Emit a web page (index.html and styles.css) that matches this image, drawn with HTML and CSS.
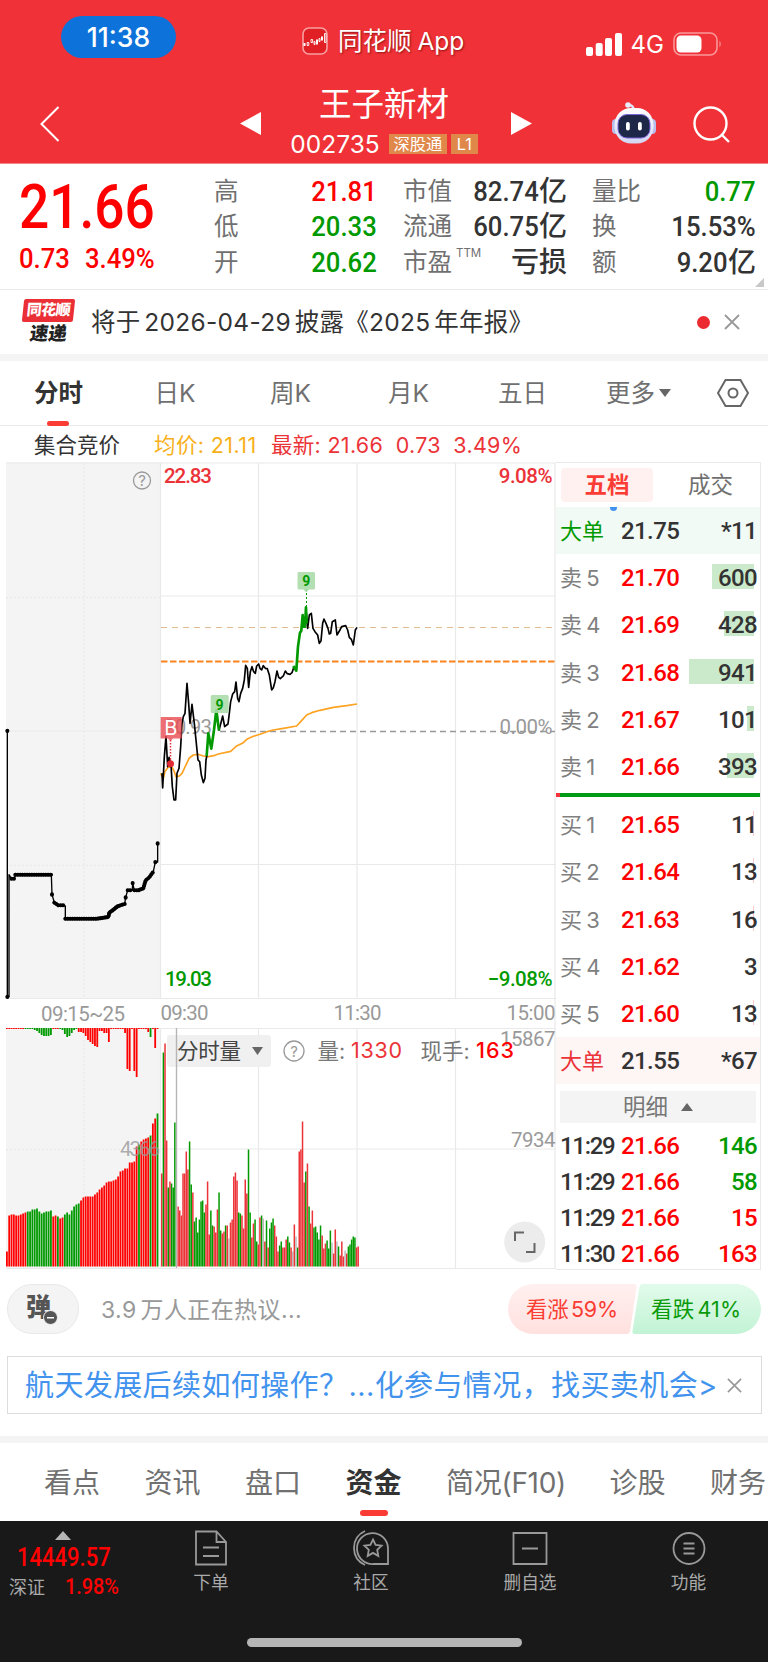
FILE: index.html
```html
<!DOCTYPE html>
<html lang="zh-CN">
<head>
  <meta charset="UTF-8" />
  <meta name="viewport" content="width=device-width, initial-scale=1.0" />
  <title>王子新材 002735</title>
  <link rel="stylesheet" href="styles.css">
</head>
<body>
  <header class="header">
    <div class="status">
      <span class="clock">11:38</span>
      <div class="app">
        <svg width="26" height="28" viewBox="0 0 26 28">
          <rect x="1" y="1" width="24" height="26" rx="6" fill="#e02024" stroke="#f8a0a2" stroke-width="1.6"/>
          <path d="M2.500 16v3M15 12.500v5M20 9.500v4" stroke="#fff" stroke-width="2"/>
          <path d="M5.200 15.500h1.600v3H5.200zM9 12.500h1.600v3H9zM12 14.500h1v3h-1zM17 11.500h1v3h-1zM22.500 6.500h1.500v9h-1.500z" fill="none" stroke="#fff" stroke-width=".9"/>
        </svg>
        <span>同花顺 App</span>
      </div>
      <div class="signal">
        <svg width="36" height="23" viewBox="0 0 36 23" fill="#fff">
          <rect x="0" y="14" width="7" height="9" rx="2"/><rect x="9.700" y="10" width="7" height="13" rx="2"/>
          <rect x="19" y="5" width="7" height="18" rx="2"/><rect x="29" y="0" width="7" height="23" rx="2"/>
        </svg>
        <span>4G</span>
        <svg width="49" height="24" viewBox="0 0 49 24">
          <rect x="1" y="1" width="43" height="22" rx="7" fill="none" stroke="#f9989a" stroke-width="1.600"/>
          <rect x="3.500" y="3.500" width="25" height="17" rx="4.500" fill="#fff"/>
          <path d="M46.500 8.500q2.500 3.500 0 7z" fill="#f9989a"/>
        </svg>
      </div>
    </div>
    <div class="nav">
      <svg class="back" width="20" height="36" viewBox="0 0 20 36"><path d="M18.500 1L1.500 18l17 17" fill="none" stroke="#fff" stroke-width="2"/></svg>
      <svg class="prev" width="21" height="23" viewBox="0 0 21 23"><path d="M21 0v23L0 11.500z" fill="#fff"/></svg>
      <div class="stock">
        <h1>王子新材</h1>
        <div class="code"><span>002735</span><em>深股通</em><em>L1</em></div>
      </div>
      <svg class="next" width="21" height="23" viewBox="0 0 21 23"><path d="M0 0v23l21-11.500z" fill="#fff"/></svg>
      <svg class="robot" width="44" height="42" viewBox="0 0 44 42">
        <defs><linearGradient id="shell" x2="0" y2="1"><stop stop-color="#fff"/><stop offset="1" stop-color="#d3d6f2"/></linearGradient></defs>
        <path d="M22 8q-1-5-5-5" fill="none" stroke="#dfe3f8" stroke-width="2.500"/>
        <circle cx="16" cy="3" r="2.800" fill="#e8ebfb"/>
        <rect x="0" y="17" width="9" height="15" rx="4" fill="#b9bdec"/><rect x="35" y="17" width="9" height="15" rx="4" fill="#b9bdec"/>
        <rect x="2.500" y="6" width="39" height="35.500" rx="16.500" fill="url(#shell)"/>
        <rect x="6" y="12.500" width="32" height="23.500" rx="9" fill="#1f2749" stroke="#7b63d8" stroke-width="1"/>
        <rect x="14" y="20" width="3.800" height="8.500" rx="1.900" fill="#fff"/><rect x="26" y="20" width="3.800" height="8.500" rx="1.900" fill="#fff"/>
      </svg>
      <svg class="search" width="37" height="37" viewBox="0 0 37 37" fill="none" stroke="#fff" stroke-width="2.400"><circle cx="17.500" cy="17.500" r="16"/><path d="M29 29l7 7"/></svg>
    </div>
  </header>

  <section class="quote">
    <div class="price up">
      <div class="big"><b>21.66</b></div>
      <div class="change"><b>0.73</b><b>3.49%</b></div>
    </div>
    <dl class="col-a">
      <div><dt>高</dt><dd class="up"><b>21.81</b></dd></div>
      <div><dt>低</dt><dd class="down"><b>20.33</b></dd></div>
      <div><dt>开</dt><dd class="down"><b>20.62</b></dd></div>
    </dl>
    <dl class="col-b">
      <div><dt>市值</dt><dd><b>82.74</b>亿</dd></div>
      <div><dt>流通</dt><dd><b>60.75</b>亿</dd></div>
      <div><dt>市盈<sup>TTM</sup></dt><dd>亏损</dd></div>
    </dl>
    <dl class="col-c">
      <div><dt>量比</dt><dd class="down"><b>0.77</b></dd></div>
      <div><dt>换</dt><dd><b>15.53%</b></dd></div>
      <div><dt>额</dt><dd><b>9.20</b>亿</dd></div>
    </dl>
    <i class="corner"></i>
  </section>

  <section class="notice">
    <div class="logo"><span>同花顺</span><strong>速递</strong></div>
    <p>将于 2026-04-29 披露《2025 年年报》</p>
    <i class="dot"></i>
    <svg width="16" height="16" viewBox="0 0 16 16" stroke="#999" stroke-width="1.800"><path d="M1 1l14 14M15 1L1 15"/></svg>
  </section>

  <nav class="tabs">
    <span class="active">分时</span><span>日K</span><span>周K</span><span>月K</span><span>五日</span>
    <span class="more">更多<i></i></span>
    <svg width="32" height="30" viewBox="0 0 32 30" fill="none" stroke="#666" stroke-width="2"><path d="M8.500 2h15L31 15l-7.500 13h-15L1 15z"/><circle cx="16" cy="15" r="4.500"/></svg>
  </nav>

  <div class="info">
    <span class="auction">集合竞价</span>
    <span class="avg">均价: 21.11</span>
    <span class="last">最新: 21.66</span><span class="last">0.73</span><span class="last">3.49%</span>
  </div>

  <main class="board">
    <svg class="chart" width="556" height="814" viewBox="0 456 556 814">
      <rect x="6" y="462" width="154" height="537" fill="#f4f4f4"/>
      <rect x="6" y="1028" width="154" height="241" fill="#f4f4f4"/>
      <g stroke="#e9e9e9" fill="none" stroke-width="1.200">
        <path d="M6 463H556M160 596H556M6 731H160M160 864.500H556M6 998.500H556M6 1028.500H556M160 1149H556M6 1268.500H556"/>
        <path d="M160.500 463V998M258.500 463V998M357 463V998M455.500 463V998M555 463V1269M160.500 1028V1269M258.500 1028V1269M357 1028V1269M455.500 1028V1269"/>
        <path d="M84 463V998M84 1028V1268M6 597.500H160M6 865.500H160M6 1149.500H160" stroke-dasharray="2 2"/>
      </g>

      <g class="help"><circle cx="142" cy="480.500" r="8.500"/><text x="142" y="486">?</text></g>

      <text class="axis gray" x="164" y="734" textLength="48">20.93</text>
      <text class="axis gray end" x="552" y="734">0.00%</text>
      <path d="M220 731.500H555" stroke="#999" stroke-width="1.300" stroke-dasharray="6 4"/>
      <path d="M161 627.500H555" stroke="#dfbb8f" stroke-width="1.200" stroke-dasharray="6 5"/>
      <path d="M161 661.500H555" stroke="#f98420" stroke-width="1.900" stroke-dasharray="6.500 2.500"/>

      <!-- call auction 09:15-09:25 -->
      <g transform="translate(0 700) scale(.3333)" fill="none" stroke="#000" stroke-linejoin="round" stroke-linecap="round">
        <path stroke-width="4" d="M22 92V890H27V524L34 536H43L46 524H154L156 583L163 608L175 616L196 618V656H293L325 651L328 638L374 612L377 592L383 571H397L398 549L403 571L430 565L437 541L460 515L466 486H473V430"/>
        <path stroke-width="12" stroke-dasharray="1 6" d="M46 524H154M156 583V584M163 608L175 616H194M196 656H293L325 651L328 638L340 630L352 619L374 612M377 592V593M383 571H395M398 549V550M403 571H415L430 565L437 541L448 532L460 515M466 486V487M473 430V431M34 536H43M22 92V93M22 890V891"/>
        <path stroke-width="10" d="M46 524H154M196 656H293L325 651L328 638L352 619"/>
      </g>

      <!-- average and intraday price -->
      <g transform="translate(140 560) scale(.3333)" fill="none" stroke-linejoin="round" stroke-width="5">
        <path stroke="#fda321" d="M62 640L70 655L75 635L84 622L95 620L103 635L108 650L118 648L126 640L138 615L148 594L160 585L174 583L190 588L205 590L225 586L235 582L272 574L290 558L310 548L322 537L340 529L360 523L385 514L400 510L430 505L470 498L482 485L500 465L515 458L540 451L580 442L620 437L651 432"/>
        <path stroke="#000" d="M66 640L68 684L73 590L78 530L83 620L87 592L93 615L97 680L102 720H107L111 640L117 625L122 560L126 490L130 470L135 460L141 370L146 430L150 490L156 433L163 490L168 540L174 600L179 605L184 645L190 668L195 655L198 600L201 585"/>
        <path stroke="#000" d="M237 512L248 468L254 500L264 492L268 460L272 425L278 402L284 395L288 366L293 415L297 425L302 400L308 385L313 360L317 316L322 325L326 382L331 335L336 320L341 335L346 340L350 318L356 312L360 325L365 330L370 317L376 325L382 326L388 345L395 390L400 383L405 365L411 333L416 352L421 356L430 348L436 333L442 341L450 343L456 338L462 320"/>
        <path stroke="#000" d="M499 160L503 205L508 165L514 160L519 205L525 215L533 225L538 250L543 243L548 190L552 177L558 190L564 205L568 222L572 220L577 185L586 180L591 225L600 210L605 200L617 197L623 210L628 232L634 238L640 255L646 210L651 202"/>
        <path stroke="#090" stroke-width="8" d="M200 588L205 520L214 566L222 510L229 450L237 512M460 318L469 332L474 260L480 218L484 212L488 165L491 200L495 200L498 142L500 190"/>
      </g>

      <g class="tag">
        <path d="M306.500 589V608" stroke="#090" stroke-dasharray="2 2"/>
        <path d="M298.500 572H313.500a1.500 1.500 0 0 1 1.500 1.500V588a1.500 1.500 0 0 1-1.500 1.500H309l-2.800 3-2.700-3H299a1.500 1.500 0 0 1-1.500-1.500V573.500a1.500 1.500 0 0 1 1-1.500z"/>
        <text x="306.200" y="586">9</text>
        <rect x="210.700" y="695" width="18" height="18" rx="1.500"/>
        <text x="219.600" y="709.500">9</text>
      </g>
      <g class="buy">
        <path d="M160.700 717H181.700V738.500H173L170.500 741L168 738.500H160.700z" fill="#e94a50" fill-opacity=".8"/>
        <path d="M170.500 740V760" stroke="#e02b35" stroke-width="1.500" stroke-dasharray="1.500 1.500"/>
        <circle cx="170.500" cy="763.700" r="3.500" fill="#e02b35"/>
        <text x="170.700" y="734.500">B</text>
      </g>

      <text class="axis red" x="164" y="483" textLength="48">22.83</text>
      <text class="axis red end" x="552" y="483">9.08%</text>
      <text class="axis green" x="165" y="985.500" textLength="47">19.03</text>
      <text class="axis green end" x="552" y="985.500">−9.08%</text>
      <text class="axis time" x="41" y="1021" textLength="84">09:15~25</text>
      <text class="axis time" x="160.500" y="1019.500" textLength="48">09:30</text>
      <text class="axis time" x="333.500" y="1019.500" textLength="48">11:30</text>
      <text class="axis time end" x="555" y="1019.500">15:00</text>

      <g id="auctionVolume"></g>
      <text class="axis time" x="120" y="1156" textLength="40" fill-opacity=".8">4366</text>
      <g id="volume"></g>

      <rect x="167" y="1035" width="104" height="32" rx="3" fill="#efefef" fill-opacity=".92"/>
      <path d="M176.500 1028V1268" stroke="#b5b5b5" stroke-width="1.400"/>
      <text class="label dark" x="177" y="1058.500" textLength="64">分时量</text>
      <path d="M252 1047H263L257.500 1055z" fill="#666"/>
      <g class="help"><circle cx="294" cy="1051" r="10"/><text x="294" y="1057">?</text></g>
      <text class="label" x="317.500" y="1058.500">量:</text>
      <text class="label value" x="351" y="1058" textLength="51">1330</text>
      <text class="label" x="420.500" y="1058.500">现手:</text>
      <text class="axis time end" x="555" y="1045.500">15867</text>
      <text class="axis time end" x="555" y="1146.500">7934</text>
      <text class="label value now" x="476" y="1058" textLength="38">163</text>
      <circle cx="524.700" cy="1242" r="20.500" fill="#ececec"/>
      <path d="M515 1241V1232.500H524M526 1252H534.500V1243" fill="none" stroke="#666" stroke-width="2"/>
    </svg>

    <aside class="book">
      <div class="book-tabs"><span class="active">五档</span><span>成交</span></div>
      <div class="row big-sell"><span>大单</span><b>21.75</b><b>*11</b></div>
      <div class="row"><span>卖 5</span><b>21.70</b><b><i style="width:42px"></i>600</b></div>
      <div class="row"><span>卖 4</span><b>21.69</b><b><i style="width:30px"></i>428</b></div>
      <div class="row"><span>卖 3</span><b>21.68</b><b><i style="width:65px"></i>941</b></div>
      <div class="row"><span>卖 2</span><b>21.67</b><b><i style="width:7px"></i>101</b></div>
      <div class="row"><span>卖 1</span><b>21.66</b><b><i style="width:27px"></i>393</b></div>
      <div class="ratio"></div>
      <div class="row bid"><span>买 1</span><b>21.65</b><b><i style="width:1px"></i>11</b></div>
      <div class="row bid"><span>买 2</span><b>21.64</b><b><i style="width:1px"></i>13</b></div>
      <div class="row bid"><span>买 3</span><b>21.63</b><b><i style="width:1px"></i>16</b></div>
      <div class="row bid"><span>买 4</span><b>21.62</b><b>3</b></div>
      <div class="row bid"><span>买 5</span><b>21.60</b><b><i style="width:1px"></i>13</b></div>
      <div class="row big-buy"><span>大单</span><b>21.55</b><b>*67</b></div>
      <div class="detail">明细<i></i></div>
      <div class="tick"><b>11:29</b><b>21.66</b><b class="down">146</b></div>
      <div class="tick"><b>11:29</b><b>21.66</b><b class="down">58</b></div>
      <div class="tick"><b>11:29</b><b>21.66</b><b class="up">15</b></div>
      <div class="tick"><b>11:30</b><b>21.66</b><b class="up">163</b></div>
    </aside>
  </main>

  <section class="talk">
    <div class="danmu">弹<i></i></div>
    <p>3.9 万人正在热议...</p>
    <div class="vote">
      <svg width="253" height="50" viewBox="0 0 253 50">
        <defs>
          <linearGradient id="bull" x2="0" y2="1"><stop stop-color="#fff0ef"/><stop offset="1" stop-color="#ffe1df"/></linearGradient>
          <linearGradient id="bear" x2="0" y2="1"><stop stop-color="#e2fbeb"/><stop offset="1" stop-color="#c2f3d5"/></linearGradient>
        </defs>
        <path d="M25 0H126q3 0 2.500 3L122 47q-.500 3-3 3H25a25 25 0 0 1 0-50z" fill="url(#bull)"/>
        <path d="M228 0H135q-3 0-3.500 3L124.500 47q-.500 3 2.500 3H228a25 25 0 0 0 0-50z" fill="url(#bear)"/>
        <text x="18" y="33" textLength="92" fill="#fa3c32">看涨 59%</text>
        <text x="143" y="33" textLength="90" fill="#0a9a0a">看跌 41%</text>
      </svg>
    </div>
  </section>

  <div class="banner">
    <p>航天发展后续如何操作？...化参与情况，找买卖机会&gt;</p>
    <svg width="15" height="15" viewBox="0 0 16 16" stroke="#999" stroke-width="1.800"><path d="M1 1l14 14M15 1L1 15"/></svg>
  </div>

  <nav class="sections">
    <span>看点</span><span>资讯</span><span>盘口</span><span class="active">资金</span><span class="brief">简况(F10)</span><span>诊股</span><span>财务</span>
  </nav>

  <footer class="footer">
    <div class="index">
      <i></i>
      <div class="points"><b>14449.57</b></div>
      <div class="name"><span>深证</span><b>1.98%</b></div>
    </div>
    <div class="item">
      <svg width="36" height="36" viewBox="0 0 36 36"><path d="M3 1.500H23.500L33 12V34.500H3zM23.500 1.500V12H33M10 17.500H26M10 26H26"/></svg>
      <span>下单</span>
    </div>
    <div class="item">
      <svg width="36" height="36" viewBox="0 0 36 36"><path d="M12 1Q1 6 1 18t11 17M35 34H21A15.500 15.500 0 1 1 35 18.500z"/><path d="M20 9.500l2.600 5.400 6 .800-4.400 4.200 1.100 6-5.300-3-5.300 3 1.100-6-4.400-4.200 6-.800z"/></svg>
      <span>社区</span>
    </div>
    <div class="item">
      <svg width="36" height="36" viewBox="0 0 36 36"><path d="M1.500 3H34.500V34H1.500zM10 18.500H26"/></svg>
      <span>删自选</span>
    </div>
    <div class="item">
      <svg width="36" height="36" viewBox="0 0 36 36"><circle cx="18" cy="18.500" r="15.500"/><path d="M12.500 13.500H23.500M12.500 18.500H23.500M12.500 23.500H23.500"/></svg>
      <span>功能</span>
    </div>
    <div class="home"></div>
  </footer>

  <script src="script.js"></script>
</body>
</html>
```

FILE: styles.css
```css
* {
  box-sizing: border-box;
}
body {
  margin: 0;
  width: 768px;
  height: 1662px;
  overflow: hidden;
  background: #fff;
  color: #333;
  font-family: Inter, "Noto Sans CJK SC", sans-serif;
}
h1, p, dl, dd {
  margin: 0;
}
svg {
  display: block;
  flex: none;
}
b {
  font-family: Roboto, sans-serif;
  font-weight: 500;
}
.up {
  color: #f00;
}
.down {
  color: #009a00;
}

/* header */
.header {
  height: 164px;
  background: #f03137;
  border-bottom: 1px solid #f6888b;
  color: #fff;
}
.status {
  display: flex;
  height: 82px;
  padding: 16px 46px 0 61px;
}
.clock {
  width: 115px;
  height: 42px;
  border-radius: 21px;
  background: #0d72d9;
  font-size: 26.500px;
  font-weight: 500;
  line-height: 43px;
  text-align: center;
}
.app {
  display: flex;
  gap: 10px;
  margin: 11px 0 0 126px;
  height: 28px;
  font-size: 24.500px;
  line-height: 28px;
  text-shadow: 1px 1px 2px rgba(80, 0, 0, .6);
  white-space: nowrap;
  word-spacing: -1px;
}
.signal {
  display: flex;
  align-items: center;
  gap: 9px;
  height: 24px;
  margin: 16px 0 0 auto;
  font-size: 24px;
}
.nav {
  display: flex;
  height: 81px;
  padding-left: 40px;
}
.back {
  margin-top: 24px;
}
.prev {
  margin: 30px 0 0 180px;
}
.stock {
  width: 250px;
  text-align: center;
}
.stock h1 {
  margin: 4px 4px 0 0;
  font-size: 32.500px;
  font-weight: 400;
  line-height: 38px;
}
.code {
  display: flex;
  gap: 4px;
  margin: 5px 0 0 29px;
  align-items: center;
  height: 30px;
  font-size: 24.500px;
}
.code span {
  margin-right: 5px;
  width: 90px;
}
.code em {
  height: 20px;
  padding: 0 4.500px;
  background: #e0884a;
  font-size: 16.300px;
  font-style: normal;
  line-height: 20px;
}
.code em + em {
  padding: 0 6px;
}
.next {
  margin-top: 30px;
}
.robot {
  margin: 20px 0 0 80px;
}
.search {
  margin: 24px 0 0 37px;
}

/* quote */
.quote {
  position: relative;
  display: flex;
  height: 126px;
  padding-top: 9px;
  border-bottom: 1px solid #e9e9e9;
}
.price {
  width: 214px;
  padding-left: 19px;
}
.price b, .quote dd b, .index b {
  display: inline-block;
  transform: scaleX(.9);
}
.big {
  height: 64px;
  margin-top: 1px;
  font-size: 60.500px;
  line-height: 64px;
}
.big b, .change b, .index b {
  transform-origin: left;
}
.price .big b {
  transform: scaleX(.88);
}
.change {
  display: flex;
  gap: 9px;
  font-size: 28.500px;
  line-height: 20px;
  margin-top: 11px;
}
.quote dl > div {
  display: flex;
  justify-content: space-between;
  height: 35.300px;
  line-height: 36px;
}
.quote dt {
  font-size: 24.500px;
  color: #707070;
}
.quote dd {
  font-size: 28px;
  font-weight: 500;
  white-space: nowrap;
}
.quote dd b {
  font-size: 28.500px;
  transform-origin: right;
}
.quote sup {
  position: relative;
  top: -4px;
  margin-left: 4px;
  font-size: 11.500px;
  line-height: 0;
}
.col-a {
  width: 163px;
}
.col-b {
  width: 164px;
  margin-left: 26px;
}
.col-c {
  width: 164px;
  margin-left: 25px;
}
.corner {
  position: absolute;
  right: 4px;
  bottom: 2px;
  border-left: 9px solid transparent;
  border-bottom: 9px solid #c8c8c8;
}

/* notice */
.notice {
  display: flex;
  align-items: center;
  height: 71px;
  padding: 0 28px 0 22px;
  border-bottom: 7px solid #f4f4f4;
}
.logo {
  width: 53px;
  height: 46px;
  text-align: center;
}
.logo span {
  display: block;
  width: 51px;
  height: 23px;
  margin-left: 1px;
  border-radius: 2px;
  background: #ea2f36;
  color: #fff;
  font-size: 15px;
  font-weight: 800;
  line-height: 22px;
  letter-spacing: -.5px;
  transform: skewX(-6deg);
}
.logo strong {
  display: block;
  font-size: 18.500px;
  font-weight: 900;
  line-height: 23px;
  color: #222;
  transform: skewX(-8deg);
}
.notice p {
  margin-left: 16px;
  font-size: 24.500px;
  line-height: 40px;
  white-space: nowrap;
  letter-spacing: .3px;
  word-spacing: -3.500px;
}
.dot {
  width: 13px;
  height: 13px;
  margin-left: auto;
  margin-right: 14px;
  border-radius: 50%;
  background: #ec2b31;
}

/* period tabs */
.tabs {
  display: grid;
  grid-template-columns: 120.500px 115.500px 118px 110px 108px 111px 32px;
  height: 65px;
  padding-left: 34px;
  border-bottom: 1px solid #e9e9e9;
  color: #707070;
  font-size: 24.500px;
  line-height: 65px;
}
.tabs .active {
  position: relative;
  color: #333;
  font-weight: 700;
}
.tabs .active::after {
  content: "";
  position: absolute;
  left: 13px;
  bottom: 0;
  width: 22px;
  height: 5px;
  border-radius: 2.500px;
  background: #fa3c34;
}
.more i {
  display: inline-block;
  margin-left: 4px;
  border: 6px solid transparent;
  border-top: 8px solid #666;
  border-bottom: 0;
  vertical-align: 5px;
}
.tabs svg {
  margin-top: 17px;
}
.info {
  display: flex;
  height: 30px;
  padding-left: 34px;
  font-size: 21.500px;
  line-height: 38px;
  white-space: nowrap;
}
.info .avg {
  margin-left: 34px;
  width: 117px;
  color: #f8b019;
  letter-spacing: .4px;
}
.info .last {
  margin-right: 12.500px;
  color: #eb3338;
  letter-spacing: .3px;
}

/* chart */
.board {
  display: grid;
  grid-template-columns: 556px 205px;
  height: 814px;
}
.axis {
  font-family: Roboto, sans-serif;
  font-size: 20.500px;
  font-weight: 500;
  letter-spacing: -.5px;
}
.axis[textLength] {
  letter-spacing: 0;
}
.end {
  text-anchor: end;
}
.red {
  fill: #ea3238;
}
.green {
  fill: #009a00;
}
.gray {
  fill: #999;
  font-weight: 400;
}
.time {
  fill: #999;
  font-weight: 450;
}
.help circle {
  fill: none;
  stroke: #999;
  stroke-width: 1.300;
}
.help text {
  fill: #999;
  font-size: 15px;
  text-anchor: middle;
}
.tag path[d$="z"], .tag rect {
  fill: #abdcab;
  fill-opacity: .9;
}
.tag text {
  fill: #009a00;
  font-family: Roboto, sans-serif;
  font-size: 14px;
  font-weight: 700;
  text-anchor: middle;
}
.buy text {
  fill: #fff;
  font-size: 20px;
  text-anchor: middle;
}
.label {
  fill: #777;
  font-size: 21.500px;
}
.dark {
  fill: #444;
}
.value {
  fill: #eb3338;
}
.now {
  fill: #f00;
  font-weight: 500;
}

/* order book */
.book {
  height: 808px;
  margin-top: 6px;
  border-right: 1px solid #e9e9e9;
  border-bottom: 1px solid #e9e9e9;
}
.book-tabs {
  display: flex;
  gap: 35px;
  height: 45px;
  padding: 5px 0 0 5px;
  border-top: 1px solid #e9e9e9;
  color: #707070;
  font-size: 22.500px;
  line-height: 33px;
}
.book-tabs .active {
  width: 92px;
  height: 34px;
  border-radius: 4px;
  background: #fff1f0;
  color: #fa3c34;
  font-weight: 700;
  text-align: center;
}
.row, .tick {
  display: grid;
  grid-template-columns: 61px 70px 1fr;
  height: 47.200px;
  padding: 0 3px 0 4px;
  line-height: 49px;
  font-size: 24px;
}
.row span {
  color: #808080;
  font-size: 22px;
  word-spacing: -2px;
}
.row b, .tick b {
  position: relative;
  color: #f00;
  letter-spacing: -.6px;
}
.row b:last-child {
  color: #333;
  text-align: right;
  z-index: 0;
}
.tick b:first-child {
  color: #333;
  letter-spacing: -1.300px;
}
.tick b:last-child {
  text-align: right;
}
.tick .down {
  color: #009a00;
}
.row i {
  position: absolute;
  z-index: -1;
  right: 3px;
  top: 10px;
  height: 25px;
  background: #cbeacb;
}
.bid i {
  background: #f9caca;
}
.big-sell {
  position: relative;
  background: #f2faf6;
}
.big-sell::before {
  content: "";
  position: absolute;
  left: 54px;
  top: 0;
  width: 7px;
  height: 4px;
  border-radius: 0 0 4px 4px;
  background: #4293ee;
}
.big-buy {
  background: #fef5f5;
}
.row.big-sell span {
  color: #009a00;
}
.row.big-buy span {
  color: #eb3338;
}
.row.big-sell b, .row.big-buy b {
  color: #333;
}
.ratio {
  height: 4px;
  margin: 3px 0 4px;
  background: linear-gradient(90deg, #f5333b 4px, #009a14 4px);
}
.detail {
  height: 32px;
  margin: 7px 4px 5px;
  background: #f4f4f4;
  color: #777;
  font-size: 22.500px;
  line-height: 31px;
  text-align: center;
}
.detail i {
  display: inline-block;
  margin-left: 13px;
  border: 6px solid transparent;
  border-bottom: 8px solid #666;
  border-top: 0;
  vertical-align: 4px;
}
.tick {
  height: 35.800px;
  line-height: 36px;
}

/* comments */
.talk {
  display: flex;
  align-items: center;
  height: 78px;
  padding: 0 7px;
}
.danmu {
  position: relative;
  width: 72px;
  height: 50px;
  border: 1px solid #e9e9e9;
  border-radius: 25px;
  background: #f4f4f4;
  color: #555;
  font-size: 25px;
  font-weight: 900;
  line-height: 45px;
  padding-left: 18px;
}
.danmu i {
  position: absolute;
  left: 35px;
  top: 25px;
  width: 15px;
  height: 15px;
  border: 1px solid #f4f4f4;
  border-radius: 50%;
  background: linear-gradient(#fff, #fff) center / 7px 1.500px no-repeat #555;
}
.talk p {
  margin: -2px 0 0 22px;
  color: #999;
  font-size: 23px;
  letter-spacing: .4px;
  word-spacing: -3px;
}
.vote {
  margin-left: auto;
}
.vote text {
  font-size: 21.500px;
  word-spacing: -3px;
}
.banner {
  display: flex;
  align-items: center;
  justify-content: space-between;
  width: 755px;
  height: 58px;
  margin: 8px 0 22px 7px;
  padding: 0 19px 0 17px;
  border: 1px solid #dcdcdc;
  color: #4293ee;
  font-size: 29px;
  white-space: nowrap;
}
.banner p {
  margin-top: -4px;
  letter-spacing: .400px;
}
.sections {
  display: flex;
  height: 85px;
  padding-left: 44px;
  border-top: 7px solid #f4f4f4;
  color: #707070;
  font-size: 28px;
  line-height: 80px;
  white-space: nowrap;
  gap: 44.500px;
}
.sections .brief {
  letter-spacing: -.3px;
  margin-right: -1px;
}
.sections .active {
  position: relative;
  color: #333;
  font-weight: 700;
}
.sections .active::after {
  content: "";
  position: absolute;
  left: 14px;
  bottom: 5px;
  width: 28px;
  height: 6px;
  border-radius: 3px;
  background: #fa3c34;
}

/* footer */
.footer {
  position: relative;
  display: grid;
  grid-template-columns: 131px 160px 160px 158px 159px;
  height: 141px;
  background: #191919;
  color: #aaa;
}
.index > i {
  display: block;
  width: 0;
  margin: 10px 0 0 55px;
  border: 8px solid transparent;
  border-bottom: 9px solid #b5b5b5;
  border-top: 0;
}
.index b {
  color: #f00;
}
.points {
  margin: 4px 0 0 17px;
  font-size: 25px;
  line-height: 27px;
}
.points b {
  transform: scaleX(.88);
}
.name {
  display: flex;
  margin-left: 9px;
  font-size: 18px;
  line-height: 33px;
}
.name b {
  margin-left: 20px;
  font-size: 22px;
  line-height: 31px;
}
.item {
  display: flex;
  flex-direction: column;
  align-items: center;
  padding-top: 9px;
  font-size: 17.700px;
  line-height: 34px;
}
.item svg {
  fill: none;
  stroke: #999;
  stroke-width: 1.800;
}
.home {
  position: absolute;
  left: 247px;
  bottom: 15px;
  width: 275px;
  height: 9px;
  border-radius: 5px;
  background: #b5b5b5;
}
```

FILE: script.js
```js
const colors = { r: '#f00', g: '#009a00', s: '#bbb' };

// bar height in px, then colour
const auction = '15r 51r 52r 52r 51r 51r 52r 53r 54r 55g 55g 57g 57g 58g 55g 53g 54g 55g 55g 56g 50r 51r 50g 48r 49r 52g 54g 52g 56g 60g 62g 63g ' +
  '66r 69r 70r 70r 70r 70r 72r 74r 77r 79r 81r 84r 85r 85r 86r 87r 90r 95r 96r 98r 98r 104r 104r 105r 120r 122g 125r 127r 128r 129r 131g 143r 148r 153g';

const unmatched = '1r 1r 1r 1r 1r 1r 1r 1r 1g 1g 1g 1g 2g 3g 5g 7g 8g 8g 8g 7g 1r 1r 1r 1g 2g 6g 9g 8g 5g 2g 1g ' +
  '4r 4r 5r 8r 12r 14r 16r 18r 19r 3r 3r 5r 5r 14r 1r 1r 1r 1r 1r 1r 5r 41r 43r 1r 43r 49r 1r 1r 1r 1r 4r 9g 1r 20r 1r';

const minutes = '93r 214g 223r 126r 79g 85r 83g 79g 144g 0s 60r 56r 51r 93r 93r 115r 97r 125g 82g 74r 45g 49g 34g 47g 65g 66g 54g 62r 85r 32r ' +
  '56g 41g 40r 34r 57r 74g 36g 33r 35r 41g 41r 28s 44r 47r 90r 94r 86r 54g 53g 51r 38r 87r 73r 117g 54g 29r 43r 47g 25g 22r ' +
  '49r 51g 48s 25r 46g 19r 38g 44g 48g 41r 30r 15r 21g 25g 19r 19r 27r 30g 24g 19r 15s 42r 30s 19g 115r 117r 145r 84r 95g 103r ' +
  '60g 43r 56r 39g 40g 34g 27g 41g 31r 18r 23r 26g 18g 36g 24s 13r 37r 25s 20g 11r 25r 10r 16s 13r 20g 22g 27g 30g 29g 19r 20r';

function drawBars(id, data, { x, step, width, base, down, palette = colors }) {
  const group = document.getElementById(id);
  data.split(' ').forEach((item, i) => {
    const height = parseInt(item);
    const bar = document.createElementNS('http://www.w3.org/2000/svg', 'rect');
    bar.setAttribute('x', x + i * step);
    bar.setAttribute('y', down ? base : base - height);
    bar.setAttribute('width', width);
    bar.setAttribute('height', height);
    bar.setAttribute('fill', palette[item.slice(-1)]);
    group.appendChild(bar);
  });
}

drawBars('auctionVolume', auction, { x: 6, step: 2.317, width: 1.8, base: 1266.5 });
drawBars('auctionVolume', unmatched, { x: 6, step: 2.317, width: 1.8, base: 1028, down: true });
drawBars('volume', minutes, { x: 161, step: 1.637, width: 1.5, base: 1266.5, palette: { r: '#eb3338', g: '#009a00', s: '#bbb' } });
```
